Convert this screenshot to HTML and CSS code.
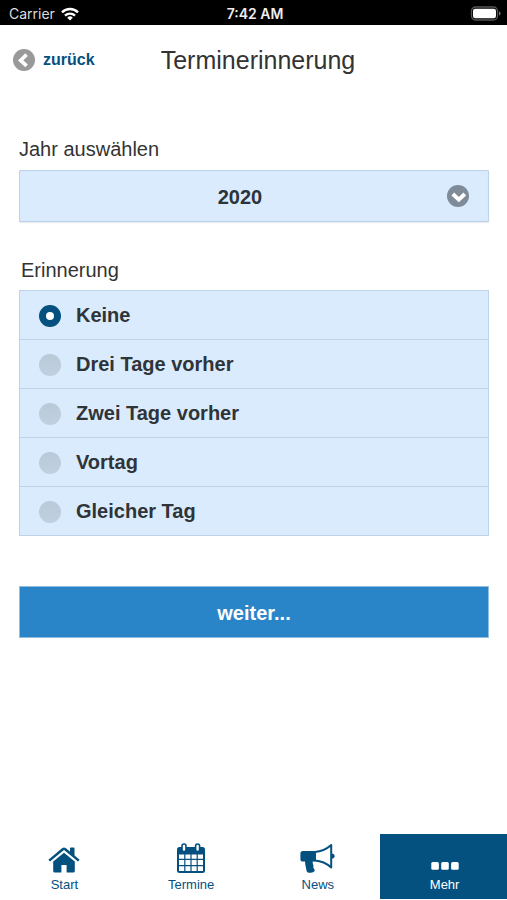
FILE: index.html
```html
<!DOCTYPE html>
<html lang="de">
<head>
<meta charset="utf-8">
<meta name="viewport" content="width=device-width, initial-scale=1">
<title>Terminerinnerung</title>
<link rel="stylesheet" href="styles.css">
</head>
<body>
<div class="status">
  <div class="status-left">
    <span>Carrier</span>
    <svg width="20" height="14" viewBox="0 0 18 14" aria-hidden="true">
      <g fill="none" stroke="#fff" stroke-width="2.4">
        <path d="M1 5.3A11.5 11.5 0 0 1 17 5.3"/>
        <path d="M4 8.6A7.2 7.2 0 0 1 14 8.6"/>
      </g>
      <path fill="#fff" d="M9 13.5L6.2 10.7A4 4 0 0 1 11.8 10.7Z"/>
    </svg>
  </div>
  <span class="status-time">7:42 AM</span>
  <div class="status-right">
    <svg width="31" height="15" viewBox="0 0 31 15" aria-hidden="true">
      <rect x="1.5" y="1" width="26" height="13" rx="4" fill="none" stroke="#555" stroke-width="1.3"/>
      <rect x="3" y="2.7" width="23" height="9.6" rx="2.2" fill="#fff"/>
      <path fill="#777" d="M29 5.2Q30.6 6 30.6 7.5T29 9.8Z"/>
    </svg>
  </div>
</div>

<header class="header">
  <a class="back" href="#">
    <svg width="22" height="22" viewBox="0 0 22 22" aria-hidden="true">
      <circle cx="11" cy="11" r="11" fill="#999"/>
      <path d="M13.6 5.6L7.6 11.4L13.6 16.8" fill="none" stroke="#fff" stroke-width="3.6"/>
    </svg>
    <span>zurück</span>
  </a>
  <h1 class="title">Terminerinnerung</h1>
</header>

<main class="content">
  <form class="form">
    <label class="caption" for="jahr">Jahr auswählen</label>
    <div class="select-box">
      <select class="select" id="jahr">
        <option>2020</option>
      </select>
      <svg class="select-icon" width="22" height="22" viewBox="0 0 22 22" aria-hidden="true">
        <circle cx="11" cy="11" r="11" fill="#7f8b98"/>
        <path d="M5.8 9L11.8 14.6L17.8 9" fill="none" stroke="#fff" stroke-width="4"/>
      </svg>
    </div>

    <fieldset class="group">
      <legend class="caption group-caption">Erinnerung</legend>
      <div class="options">
        <label class="option"><input class="radio" type="radio" name="erinnerung" checked>Keine</label>
        <label class="option"><input class="radio" type="radio" name="erinnerung">Drei Tage vorher</label>
        <label class="option"><input class="radio" type="radio" name="erinnerung">Zwei Tage vorher</label>
        <label class="option"><input class="radio" type="radio" name="erinnerung">Vortag</label>
        <label class="option"><input class="radio" type="radio" name="erinnerung">Gleicher Tag</label>
      </div>
    </fieldset>

    <button class="submit" type="button">weiter...</button>
  </form>
</main>

<nav class="tabs">
  <a class="tab" href="#">
    <svg width="32" height="30" viewBox="0 0 32 30" aria-hidden="true">
      <path fill="#04507f" d="M5.2 18.6L16 9.8L26.8 18.6V28Q26.8 29.6 25.2 29.6H18.6V22H13.4V29.6H6.8Q5.2 29.6 5.2 28Z"/>
      <path fill="#04507f" d="M22 5.5Q22 4.6 22.9 4.6H25.6Q26.5 4.6 26.5 5.5V13.5L22 9.8Z"/>
      <path fill="none" stroke="#04507f" stroke-width="2.5" stroke-linejoin="round" d="M1.2 17.6L14.8 6.2Q16 5.4 17.2 6.2L30.8 17.6"/>
    </svg>
    <span>Start</span>
  </a>
  <a class="tab" href="#">
    <svg width="28" height="30" viewBox="0 0 28 30" aria-hidden="true">
      <rect y="4" width="28" height="26" rx="2.5" fill="#04507f"/>
      <path fill="#fff" d="M2 11.5H7.2V15.7H2ZM8.4 11.5H13.4V15.7H8.4ZM14.6 11.5H19.6V15.7H14.6ZM20.8 11.5H26V15.7H20.8ZM2 17H7.2V22H2ZM8.4 17H13.4V22H8.4ZM14.6 17H19.6V22H14.6ZM20.8 17H26V22H20.8ZM2 23.3H7.2V28H2ZM8.4 23.3H13.4V28H8.4ZM14.6 23.3H19.6V28H14.6ZM20.8 23.3H26V28H20.8Z"/>
      <g fill="#fff" stroke="#04507f" stroke-width="1.6">
        <rect x="5" y="1" width="4" height="7.6" rx="2"/>
        <rect x="18.6" y="1" width="4" height="7.6" rx="2"/>
      </g>
    </svg>
    <span>Termine</span>
  </a>
  <a class="tab" href="#">
    <svg width="35" height="30" viewBox="0 0 35 30" aria-hidden="true">
      <path fill="#04507f" d="M3 8H15V18.6H12.8Q12.4 20.5 13.5 22.5Q12.8 24.5 14.6 26.8Q15 27.5 14.2 28.6Q11.5 30.6 7.6 29.4Q6.4 28.6 6.2 25.9Q5.2 21.9 5 18.6H3Q.4 18.6 .4 16V10.6Q.4 8 3 8Z"/>
      <path fill="#fff" stroke="#04507f" stroke-width="2" stroke-linejoin="round" d="M15 9Q24 8.4 31.2 2V24.4Q24 18.2 15 17.6Z"/>
      <path fill="#04507f" d="M31.5 10.6Q34.6 10.8 34.6 13.2T31.5 15.8Z"/>
    </svg>
    <span>News</span>
  </a>
  <a class="tab tab-active" href="#">
    <svg width="28" height="30" viewBox="0 0 28 30" aria-hidden="true">
      <g fill="#fff">
        <rect x=".3" y="19" width="7.6" height="7.8" rx="1.6"/>
        <rect x="10.2" y="19" width="7.6" height="7.8" rx="1.6"/>
        <rect x="20.1" y="19" width="7.6" height="7.8" rx="1.6"/>
      </g>
    </svg>
    <span>Mehr</span>
  </a>
</nav>
</body>
</html>
```

FILE: styles.css
```css
* {
  box-sizing: border-box;
}

body {
  margin: 0;
  min-height: 100vh;
  display: flex;
  flex-direction: column;
  background: #fff;
  color: #333;
  font-family: "Liberation Sans", Arial, sans-serif;
}

.status {
  display: grid;
  grid-template-columns: 1fr auto 1fr;
  align-items: center;
  height: 25px;
  padding: 2px 6px 0 9px;
  background: #000;
  color: #ddd;
  font: 14px/20px Inter, sans-serif;
}

.status-left {
  display: flex;
  align-items: center;
  gap: 5px;
}

.status-time {
  color: #eee;
  font-size: 14px;
  font-weight: 600;
}

.status-right {
  display: flex;
  justify-content: flex-end;
}

.header {
  display: grid;
  grid-template-columns: 1fr auto 1fr;
  align-items: center;
  height: 70px;
  padding: 0 4px 0 13px;
}

.back {
  display: flex;
  align-items: center;
  gap: 8px;
  color: #04507f;
  font-size: 16px;
  font-weight: bold;
  text-decoration: none;
}

.title {
  margin: 0;
  font-size: 25px;
  font-weight: normal;
}

.content {
  flex: 1;
  padding: 42px 18px 24px 19px;
}

.form {
  display: flex;
  flex-direction: column;
}

.caption {
  padding: 0;
  font-size: 20px;
  line-height: 24px;
}

.select-box {
  display: grid;
  align-items: center;
  margin-top: 9px;
}

.select,
.select-icon {
  grid-area: 1 / 1;
}

.select {
  appearance: none;
  width: 100%;
  height: 52px;
  padding: 2px 48px 0 20px;
  border: 1px solid #bdd3ea;
  border-radius: 1px;
  background: #daebfe;
  box-shadow: inset 0 0 1px #bdd3ea, 0 1px 1px #e4e9ef;
  color: #2b333b;
  font: bold 20px "Liberation Sans", Arial, sans-serif;
  text-align: center;
  text-align-last: center;
}

.select-icon {
  justify-self: end;
  margin-right: 20px;
  pointer-events: none;
}

.group {
  min-width: 0;
  margin: 36px 0 0;
  padding: 0;
  border: 0;
}

.group-caption {
  margin-left: 2px;
}

.options {
  margin-top: 8px;
  border: 1px solid #bdd3ea;
  border-top: 0;
  background: #daebfe;
}

.option {
  display: flex;
  align-items: center;
  gap: 15px;
  height: 49px;
  padding: 1px 19px 0;
  border-top: 1px solid #bdd3ea;
  color: #2f3437;
  font-size: 20px;
  font-weight: bold;
}

.radio {
  appearance: none;
  width: 22px;
  height: 22px;
  margin: 0;
  border: 0 solid #04507f;
  border-radius: 50%;
  background: linear-gradient(#b9c9d8, #c0d0e0);
}

.radio:checked {
  border-width: 7px;
  background: #fff;
}

.submit {
  height: 52px;
  margin-top: 50px;
  padding: 2px 0 0;
  border: 1px solid #8fc0e3;
  background: #2985c8;
  color: #fff;
  font: bold 20px "Liberation Sans", Arial, sans-serif;
}

.tabs {
  display: grid;
  grid-template-columns: repeat(4, 1fr);
  height: 66px;
  padding-bottom: 1px;
}

.tab {
  display: flex;
  flex-direction: column;
  align-items: center;
  gap: 4px;
  padding: 9px 0 0 2px;
  color: #04507f;
  font-size: 13px;
  line-height: 16px;
  text-decoration: none;
}

.tab-active {
  background: #04507f;
  color: #fff;
}
```
